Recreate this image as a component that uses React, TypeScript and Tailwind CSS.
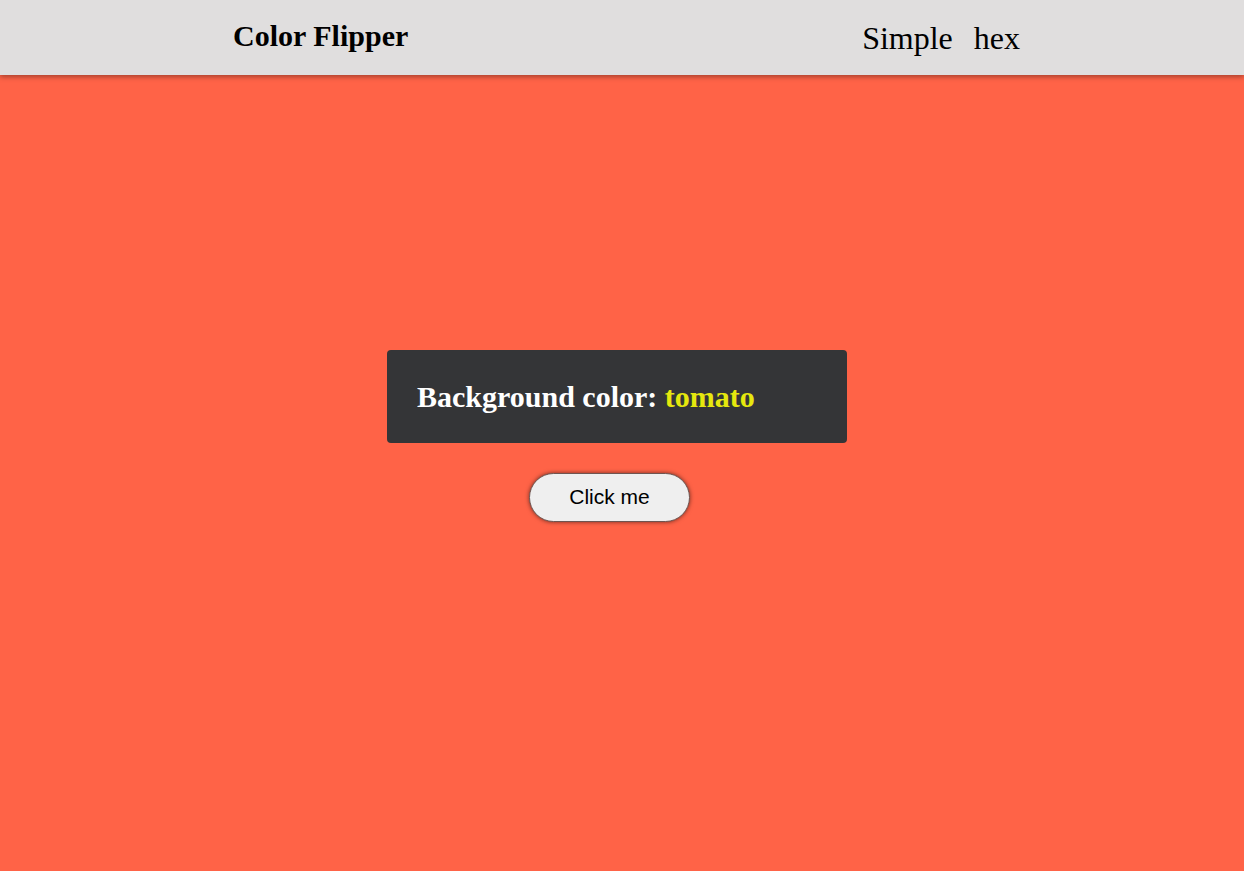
import { useState } from "react";

const colors = ["tomato", "steelblue", "seagreen", "orchid", "goldenrod"];

const bgMap: Record<string, string> = {
  tomato: "bg-[#ff6347]",
  steelblue: "bg-[#4682b4]",
  seagreen: "bg-[#2e8b57]",
  orchid: "bg-[#da70d6]",
  goldenrod: "bg-[#daa520]",
};

const App = () => {
  const [color, setColor] = useState("tomato");

  const handleClick = () => {
    const next = colors[(colors.indexOf(color) + 1) % colors.length];
    setColor(next);
  };

  return (
    <div className={`min-h-screen ${bgMap[color]} font-['Liberation_Serif',serif]`}>
      {/* Nav */}
      <nav className="relative z-10 flex h-[75px] items-center justify-between bg-[#e0dede] pl-[233px] pr-[224px] shadow-[0_2px_5px_rgba(0,0,0,0.35)]">
        <h1 className="mb-[4px] text-[30px] font-bold leading-none text-black">Color Flipper</h1>
        <ul className="flex gap-[21px] text-[32px] leading-none text-black">
          <li className="ml-[1px]">Simple</li>
          <li>hex</li>
        </ul>
      </nav>

      {/* Main */}
      <main className="flex h-[796px] flex-col items-center justify-center pb-[75px]">
        <div className="mr-[10px] flex h-[93px] w-[460px] items-center rounded-[4px] bg-[#343537] pl-[30px]">
          <h2 className="mt-[2px] text-[30px] font-bold leading-none text-white">
            Background color: <span className="text-[#e6e80e]">{color}</span>
          </h2>
        </div>
        <button
          onClick={handleClick}
          className="mr-[25px] mt-[30px] h-[49px] w-[161px] rounded-full border border-[#6e5551] bg-[#efefef] font-['Liberation_Sans',Arial,sans-serif] text-[21px] text-black shadow-[0_0_4px_rgba(0,0,0,0.55)]"
        >
          Click me
        </button>
      </main>
    </div>
  );
};

export default App;
